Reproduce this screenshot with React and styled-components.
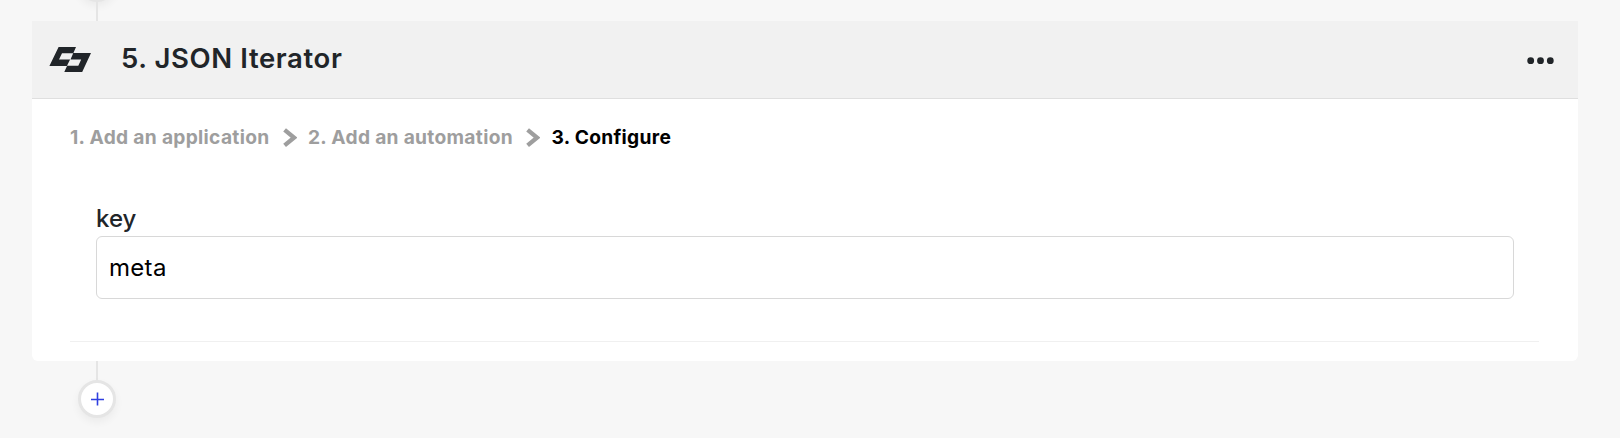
import React from 'react';
import styled, { createGlobalStyle } from 'styled-components';

const GlobalStyle = createGlobalStyle`
  *, *::before, *::after { box-sizing: border-box; }
  body {
    margin: 0;
    background: #f7f7f7;
    color: #212529;
    font-family: Inter, 'Liberation Sans', sans-serif;
    overflow: hidden;
  }
`;

const Flow = styled.main`
  display: flex;
  flex-direction: column;
  height: 438px;
  padding: 0 42px 0 32px;
  overflow: hidden;
`;

const Connector = styled.div`
  flex: none;
  width: 2px;
  height: 19px;
  margin-left: 64px;
  background: #e5e5e5;
`;

const AddButton = styled.button`
  flex: none;
  display: flex;
  align-items: center;
  justify-content: center;
  width: 38px;
  height: 38px;
  margin: ${(p) => (p.$clipped ? '-36px' : '0')} 0 0 46px;
  padding: 0;
  border: 3px solid #e5e5e5;
  border-radius: 50%;
  background: #fff;
  box-shadow: 0 4px 8px rgba(0, 0, 0, 0.05);
`;

const Card = styled.section`
  flex: none;
  height: 340px;
  background: #fff;
  border-radius: 0 0 6px 6px;
`;

const Header = styled.header`
  display: flex;
  align-items: center;
  height: 78px;
  padding: 0 24px 0 17px;
  background: #f1f1f1;
  border-bottom: 1px solid #dfdfdf;
`;

const Title = styled.h2`
  flex: 1;
  margin: 0 0 3px 30px;
  font-size: 27.5px;
  font-weight: 600;
  line-height: 36px;
  letter-spacing: 0.6px;
`;

const MenuButton = styled.button`
  display: flex;
  padding: 2px 0 0;
  border: 0;
  background: none;
  color: #212529;
`;

const Body = styled.div`
  padding: 25px 39px 0 38px;
`;

const Steps = styled.nav`
  display: flex;
  align-items: center;
  height: 28px;
`;

const Step = styled.span`
  padding-bottom: 2px;
  font-size: 19.2px;
  font-weight: 700;
  line-height: 26px;
  letter-spacing: 0.3px;
  white-space: nowrap;
  color: ${(p) => (p.$active ? '#000' : '#9e9e9e')};
`;

const Chevron = styled.svg`
  flex: none;
  margin: 0 11px 0 13.5px;
`;

const Form = styled.div`
  display: flex;
  flex-direction: column;
  height: 190px;
  padding: 52px 25px 0 26px;
  border-bottom: 1px solid #f0f0f0;
`;

const Label = styled.label`
  height: 32px;
  font-size: 24px;
  font-weight: 500;
  line-height: 30px;
`;

const Input = styled.input`
  width: 100%;
  height: 63px;
  padding: 0 12px;
  border: 1px solid #d8d8d8;
  border-radius: 6px;
  outline: 0;
  background: #fff;
  color: #000;
  font: 400 24px Inter, 'Liberation Sans', sans-serif;
  letter-spacing: 0.3px;
`;

const Logo = () => (
  <svg width="42" height="26" viewBox="0 0 42 26" fill="#212529" fillRule="evenodd">
    <path d="M9.6 0H27L24.4 6H42L33.2 25H15.3L18 19H.4ZM13 6.3L10 12.5H21.5L24.2 6.3ZM21.1 12.5L18 18.8H29.3L32.2 12.5Z" />
  </svg>
);

const Dots = () => (
  <svg width="27" height="8" viewBox="0 0 27 8" fill="currentColor">
    <circle cx="3.7" cy="3.7" r="3.4" />
    <circle cx="13.5" cy="3.7" r="3.4" />
    <circle cx="23.3" cy="3.7" r="3.4" />
  </svg>
);

const Separator = () => (
  <Chevron width="14" height="20" viewBox="0 0 14 20" fill="none" stroke="#9e9e9e" strokeWidth="4.3">
    <path d="M1.6 1.8L11 9.6L1.6 17.4" />
  </Chevron>
);

const Plus = () => (
  <svg width="14" height="14" viewBox="0 0 14 14" fill="none" stroke="#2f3fe0" strokeWidth="1.6">
    <path d="M7.5 .5V13.5M1 7.5H14" />
  </svg>
);

export default function App() {
  return (
    <>
      <GlobalStyle />
      <Flow>
        <AddButton $clipped aria-label="Add step" />
        <Connector />
        <Card>
          <Header>
            <Logo />
            <Title>5. JSON Iterator</Title>
            <MenuButton aria-label="Options"><Dots /></MenuButton>
          </Header>
          <Body>
            <Steps>
              <Step>1. Add an application</Step>
              <Separator />
              <Step>2. Add an automation</Step>
              <Separator />
              <Step $active>3. Configure</Step>
            </Steps>
            <Form>
              <Label htmlFor="key">key</Label>
              <Input id="key" defaultValue="meta" />
            </Form>
          </Body>
        </Card>
        <Connector />
        <AddButton aria-label="Add step"><Plus /></AddButton>
      </Flow>
    </>
  );
}
